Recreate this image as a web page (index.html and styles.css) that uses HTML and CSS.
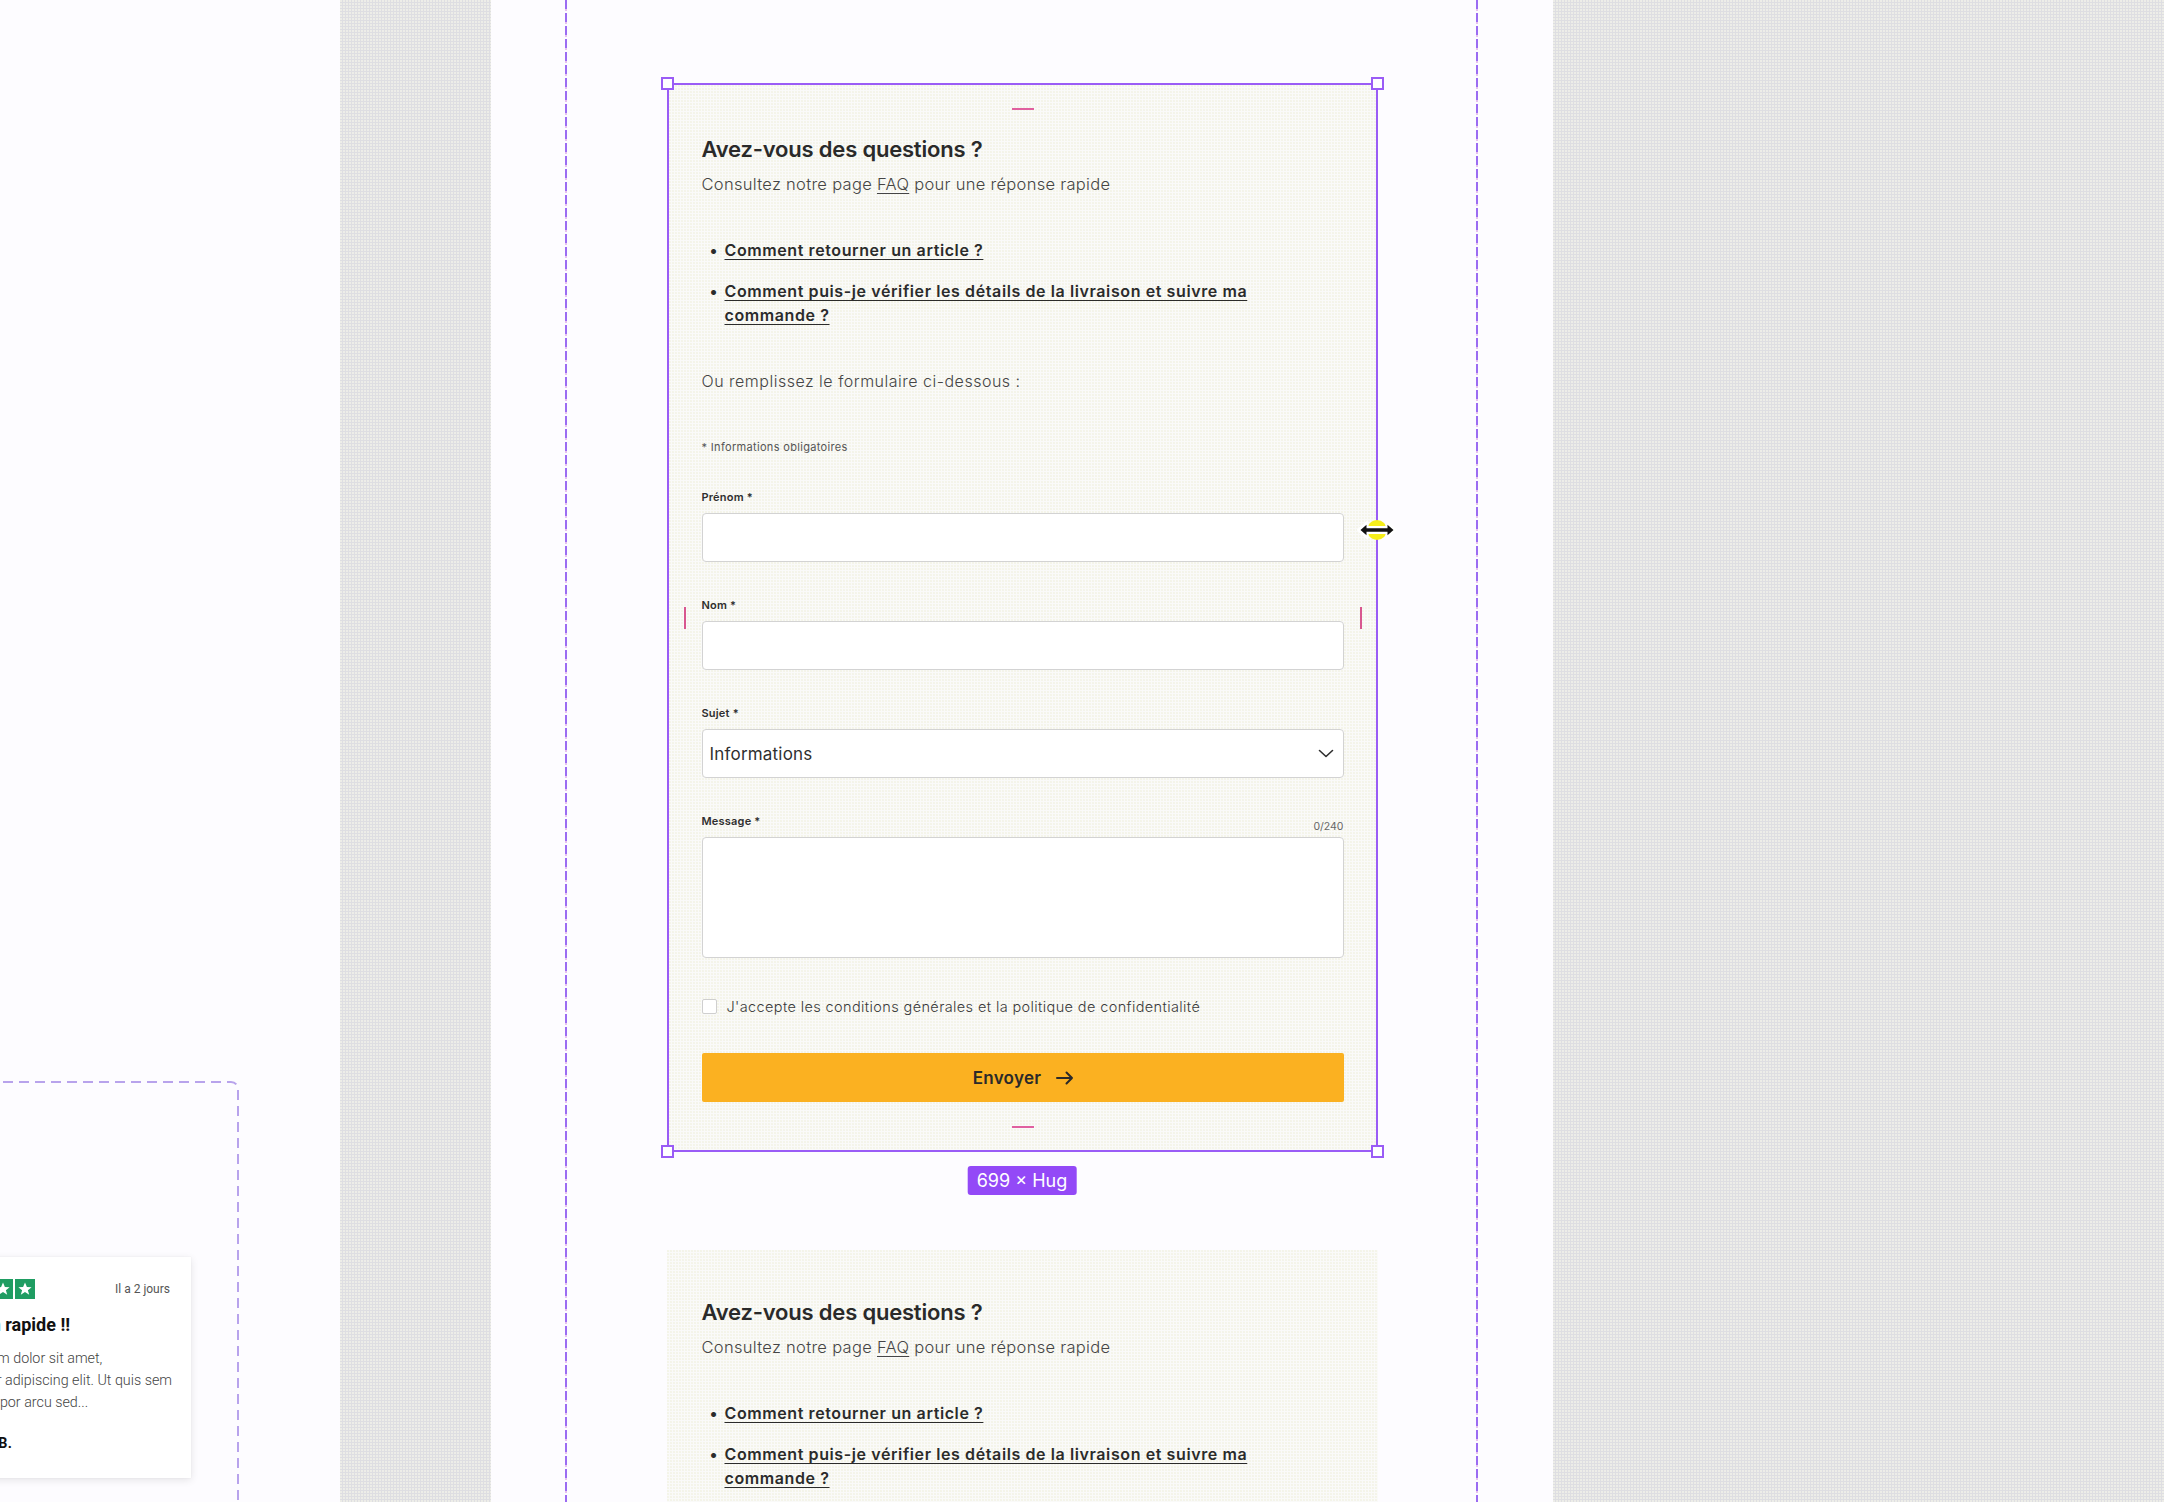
FILE: index.html
```html
<!DOCTYPE html>
<html lang="fr">
<head>
<meta charset="utf-8">
<title>Avez-vous des questions ?</title>
<link rel="stylesheet" href="styles.css">
</head>
<body>
<div class="canvas">
  <div class="zone-left">
    <svg class="dash-frame" width="262" height="460" viewBox="0 0 262 460" aria-hidden="true">
      <rect x="1" y="1" width="258" height="520" rx="7" ry="7" fill="none" stroke="#b8a3ec" stroke-width="2" stroke-dasharray="10 6"/>
    </svg>
    <div class="review">
      <div class="review-head">
        <div class="stars">
          <span class="star"><svg width="20" height="20" viewBox="0 0 20 20"><polygon points="10,3.6 11.9,8.1 16.6,8.3 12.9,11.2 14.2,15.8 10,13.1 5.8,15.8 7.1,11.2 3.4,8.3 8.1,8.1" fill="#fff"/></svg></span>
          <span class="star"><svg width="20" height="20" viewBox="0 0 20 20"><polygon points="10,3.6 11.9,8.1 16.6,8.3 12.9,11.2 14.2,15.8 10,13.1 5.8,15.8 7.1,11.2 3.4,8.3 8.1,8.1" fill="#fff"/></svg></span>
          <span class="star"><svg width="20" height="20" viewBox="0 0 20 20"><polygon points="10,3.6 11.9,8.1 16.6,8.3 12.9,11.2 14.2,15.8 10,13.1 5.8,15.8 7.1,11.2 3.4,8.3 8.1,8.1" fill="#fff"/></svg></span>
          <span class="star"><svg width="20" height="20" viewBox="0 0 20 20"><polygon points="10,3.6 11.9,8.1 16.6,8.3 12.9,11.2 14.2,15.8 10,13.1 5.8,15.8 7.1,11.2 3.4,8.3 8.1,8.1" fill="#fff"/></svg></span>
          <span class="star"><svg width="20" height="20" viewBox="0 0 20 20"><polygon points="10,3.6 11.9,8.1 16.6,8.3 12.9,11.2 14.2,15.8 10,13.1 5.8,15.8 7.1,11.2 3.4,8.3 8.1,8.1" fill="#fff"/></svg></span>
        </div>
        <span class="review-date">Il a 2 jours</span>
      </div>
      <p class="review-title">Livraison rapide !!</p>
      <p class="review-body"><span>Lorem ipsum dolor sit amet,</span><span>consectetur adipiscing elit. Ut quis sem</span><span>Nullam tempor arcu sed...</span></p>
      <p class="review-author">Amandine B.</p>
    </div>
  </div>

  <div class="zone-gray zone-gray-a"></div>

  <div class="page">
    <span class="guide guide-l"></span>
    <span class="guide guide-r"></span>

    <section class="card card-selected">
      <h2 class="card-title">Avez-vous des questions ?</h2>
      <p class="card-sub">Consultez notre page <a href="#">FAQ</a> pour une réponse rapide</p>
      <ul class="faq-list">
        <li><a href="#">Comment retourner un article ?</a></li>
        <li><a href="#">Comment puis-je vérifier les détails de la livraison et suivre ma<br>commande ?</a></li>
      </ul>
      <p class="card-intro">Ou remplissez le formulaire ci-dessous :</p>
      <p class="req-note">* Informations obligatoires</p>

      <form class="form">
        <div class="field">
          <label class="field-label" for="prenom">Prénom *</label>
          <input class="field-input" id="prenom" type="text">
        </div>
        <div class="field">
          <label class="field-label" for="nom">Nom *</label>
          <input class="field-input" id="nom" type="text">
        </div>
        <div class="field">
          <label class="field-label" for="sujet">Sujet *</label>
          <div class="select-wrap">
            <select class="field-input field-select" id="sujet">
              <option>Informations</option>
            </select>
            <svg class="chevron" width="16" height="9" viewBox="0 0 16 9" aria-hidden="true"><path d="M1.5 1.5 L8 7.5 L14.5 1.5" fill="none" stroke="#2e2e2e" stroke-width="1.6" stroke-linecap="round" stroke-linejoin="round"/></svg>
          </div>
        </div>
        <div class="field">
          <div class="label-row">
            <label class="field-label" for="message">Message *</label>
            <span class="counter">0/240</span>
          </div>
          <textarea class="field-input field-area" id="message"></textarea>
        </div>
        <label class="consent">
          <input class="consent-box" type="checkbox">
          <span>J'accepte les conditions générales et la politique de confidentialité</span>
        </label>
        <button class="submit" type="button">
          <span>Envoyer</span>
          <svg width="18" height="14" viewBox="0 0 18 14" aria-hidden="true"><path d="M1 7 H16 M10.5 1.5 L16 7 L10.5 12.5" fill="none" stroke="#2a2a2a" stroke-width="2" stroke-linecap="round" stroke-linejoin="round"/></svg>
        </button>
      </form>

      <span class="pad-mark pad-top"></span>
      <span class="pad-mark pad-bottom"></span>
      <span class="side-mark side-l"></span>
      <span class="side-mark side-r"></span>
      <span class="handle h-tl"></span>
      <span class="handle h-tr"></span>
      <span class="handle h-bl"></span>
      <span class="handle h-br"></span>
      <span class="size-tag">699 × Hug</span>
      <svg class="resize-cursor" width="42" height="26" viewBox="0 0 42 26" aria-hidden="true">
        <ellipse cx="21" cy="13" rx="10" ry="10" fill="#f5ee1a"/>
        <path d="M2.5 13 L11 5.5 V10.5 H31 V5.5 L39.5 13 L31 20.5 V15.5 H11 V20.5 Z" fill="#ffffff" stroke="#ffffff" stroke-width="3" stroke-linejoin="round"/>
        <path d="M4.5 13 L10.5 7.8 V11.3 H31.5 V7.8 L37.5 13 L31.5 18.2 V14.7 H10.5 V18.2 Z" fill="#111111"/>
      </svg>
    </section>

    <section class="card card-plain">
      <h2 class="card-title">Avez-vous des questions ?</h2>
      <p class="card-sub">Consultez notre page <a href="#">FAQ</a> pour une réponse rapide</p>
      <ul class="faq-list">
        <li><a href="#">Comment retourner un article ?</a></li>
        <li><a href="#">Comment puis-je vérifier les détails de la livraison et suivre ma<br>commande ?</a></li>
      </ul>
    </section>
  </div>

  <div class="zone-gray zone-gray-b"></div>
</div>
</body>
</html>
```

FILE: styles.css
```css
* {
  box-sizing: border-box;
}

html, body {
  margin: 0;
  padding: 0;
  background: #fdfcff;
}

body {
  font-family: "Inter", "Noto Sans", "Liberation Sans", sans-serif;
  color: #2b2b2b;
}

.canvas {
  display: flex;
  width: 2164px;
  height: 1502px;
  overflow: hidden;
  background: #fdfcff;
}

/* left canvas area */
.zone-left {
  position: relative;
  flex: none;
  width: 340px;
  height: 100%;
  background: #fdfcff;
}

.dash-frame {
  position: absolute;
  left: -21px;
  top: 1081px;
}

.review {
  position: absolute;
  left: -94px;
  top: 1257px;
  width: 285px;
  height: 221px;
  background: #ffffff;
  box-shadow: 0 2px 8px rgba(0, 0, 0, 0.10), 0 0 1px rgba(0, 0, 0, 0.08);
  padding: 21px 21px 0 21px;
  font-family: "Roboto", "Liberation Sans", sans-serif;
}

.review-head {
  display: flex;
  align-items: center;
  justify-content: space-between;
  height: 21px;
}

.stars {
  display: flex;
  gap: 2px;
}

.star {
  display: block;
  width: 20px;
  height: 20px;
  background: #1f9d62;
}

.star svg {
  display: block;
}

.review-date {
  font-size: 12px;
  color: #555;
  font-weight: 400;
  line-height: 16px;
}

.review-title {
  margin: 14px 0 0;
  font-size: 18px;
  line-height: 24px;
  font-weight: 700;
  color: #111;
  white-space: nowrap;
}

.review-body {
  margin: 10px 0 0;
  font-size: 14.3px;
  line-height: 22px;
  font-weight: 300;
  color: #444;
}

.review-body span {
  display: block;
  white-space: nowrap;
}

.review-author {
  margin: 20px 0 0;
  font-size: 14.3px;
  line-height: 20px;
  font-weight: 700;
  letter-spacing: 0.3px;
  color: #111;
}

/* gray canvas strips */
.zone-gray {
  flex: none;
  height: 100%;
  background-color: #dedee2;
  background-image: radial-gradient(circle at 1px 1px, rgba(255, 255, 240, 0.45) 0.8px, transparent 1.2px);
  background-size: 3px 3px;
}

.zone-gray-a {
  width: 151px;
}

.zone-gray-b {
  flex: 1;
}

/* page frame */
.page {
  position: relative;
  flex: none;
  width: 1062px;
  height: 100%;
  background: #fdfcff;
  display: flex;
  flex-direction: column;
  align-items: center;
  padding-top: 83px;
}

.guide {
  position: absolute;
  top: 0;
  bottom: 0;
  width: 2px;
  background-image: repeating-linear-gradient(to bottom, #9b6cf2 0 9px, rgba(215, 150, 230, 0.6) 9px 11px, transparent 11px 13px);
}

.guide-l {
  left: 74px;
}

.guide-r {
  right: 75px;
}

/* cards */
.card {
  position: relative;
  flex: none;
  width: 711px;
  background-color: #fafaf9;
  background-image: radial-gradient(circle at 1px 1px, rgba(235, 235, 210, 0.4) 0.7px, transparent 1.1px);
  background-size: 3px 3px;
}

.card-selected {
  border: 2px solid #9a5cf6;
  padding: 49px 32px 48px 33px;
}

.card-plain {
  margin-top: 98px;
  padding: 47px 34px 40px 35px;
}

.card-title {
  margin: 0;
  font-size: 22px;
  line-height: 30px;
  font-weight: 600;
  color: #2a2a2a;
  letter-spacing: -0.2px;
}

.card-sub {
  margin: 8px 0 0;
  font-size: 16.5px;
  line-height: 24px;
  font-weight: 300;
  letter-spacing: 0.3px;
  color: #454545;
}

.card-sub a {
  color: #454545;
  text-decoration: underline;
  text-underline-offset: 3px;
  text-decoration-thickness: 1px;
}

.faq-list {
  margin: 42px 0 0;
  padding: 0;
  list-style: none;
}

.faq-list li {
  position: relative;
  padding-left: 23px;
  font-size: 16px;
  line-height: 24px;
  font-weight: 600;
  letter-spacing: 0.6px;
}

.faq-list li + li {
  margin-top: 17px;
}

.faq-list li::before {
  content: "•";
  position: absolute;
  left: 8px;
  top: 0;
  color: #2b2b2b;
}

.faq-list a {
  color: #2b2b2b;
  text-decoration: underline;
  text-underline-offset: 3px;
  text-decoration-thickness: 1px;
}

.card-intro {
  margin: 42px 0 0;
  font-size: 16px;
  line-height: 24px;
  font-weight: 300;
  letter-spacing: 0.5px;
  color: #454545;
}

.req-note {
  margin: 46px 0 0;
  font-size: 11px;
  line-height: 16px;
  font-weight: 400;
  letter-spacing: 0.33px;
  color: #555;
}

/* form */
.form {
  margin: 34px 0 0;
  display: flex;
  flex-direction: column;
}

.field + .field {
  margin-top: 35px;
}

.field-label {
  display: block;
  font-size: 11px;
  line-height: 16px;
  font-weight: 600;
  letter-spacing: 0.2px;
  color: #2f2f2f;
}

.label-row {
  display: flex;
  justify-content: space-between;
  align-items: flex-end;
}

.counter {
  font-size: 10.5px;
  line-height: 12px;
  font-weight: 400;
  color: #666;
  margin-bottom: -4px;
}

.field-input {
  display: block;
  width: 100%;
  height: 49px;
  margin-top: 8px;
  border: 1px solid #d3d3d3;
  border-radius: 4px;
  background: #ffffff;
  font-family: inherit;
  outline: none;
}

.select-wrap {
  position: relative;
}

.field-select {
  -webkit-appearance: none;
  appearance: none;
  padding: 0 0 0 7px;
  font-size: 17px;
  font-weight: 400;
  letter-spacing: 0.2px;
  color: #2f2f2f;
}

.chevron {
  position: absolute;
  right: 10px;
  top: 20px;
}

.field-area {
  height: 121px;
  resize: none;
}

.consent {
  display: flex;
  align-items: center;
  gap: 10px;
  margin-top: 40px;
  height: 16px;
  font-size: 14.5px;
  font-weight: 300;
  letter-spacing: 0.38px;
  color: #3a3a3a;
}

.consent-box {
  -webkit-appearance: none;
  appearance: none;
  margin: 0;
  flex: none;
  width: 15px;
  height: 15px;
  border: 1px solid #cfcfcf;
  border-radius: 2px;
  background: #fff;
}

.submit {
  display: flex;
  align-items: center;
  justify-content: center;
  gap: 15px;
  margin-top: 39px;
  width: 100%;
  height: 49px;
  border: none;
  border-radius: 2px;
  background: #fbb121;
  font-family: inherit;
  font-size: 17px;
  font-weight: 600;
  letter-spacing: 0.3px;
  color: #2a2a2a;
  padding: 0 0 0 2px;
}

.submit svg {
  display: block;
}

/* selection overlays (design tool) */
.pad-mark {
  position: absolute;
  left: 50%;
  width: 22px;
  height: 2px;
  margin-left: -10px;
  background: #e0609f;
}

.pad-top {
  top: 23px;
}

.pad-bottom {
  bottom: 22px;
}

.side-mark {
  position: absolute;
  top: 522px;
  width: 2px;
  height: 22px;
  background: #d8578f;
}

.side-l {
  left: 15px;
}

.side-r {
  right: 14px;
}

.handle {
  position: absolute;
  width: 13px;
  height: 13px;
  border: 2px solid #9a5cf6;
  background: #ffffff;
}

.h-tl { left: -8px; top: -8px; }
.h-tr { right: -8px; top: -8px; }
.h-bl { left: -8px; bottom: -8px; }
.h-br { right: -8px; bottom: -8px; }

.size-tag {
  position: absolute;
  left: 50%;
  top: calc(100% + 16px);
  transform: translateX(-50%);
  height: 29px;
  padding: 0 9px;
  border-radius: 3px;
  background: #9349f7;
  color: #ffffff;
  font-size: 18px;
  line-height: 29px;
  font-weight: 400;
  white-space: nowrap;
}

.resize-cursor {
  position: absolute;
  right: -22px;
  top: 432px;
}
```
